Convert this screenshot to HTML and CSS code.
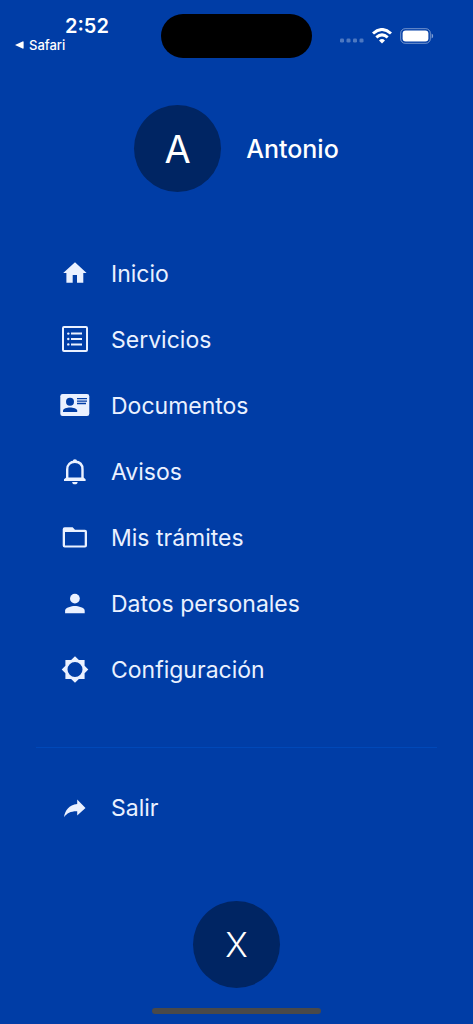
FILE: index.html
```html
<!DOCTYPE html>
<html lang="es">
<head>
<meta charset="utf-8">
<meta name="viewport" content="width=device-width, initial-scale=1">
<title>Menú</title>
<link rel="stylesheet" href="styles.css">
</head>
<body>
<div class="screen">
  <header class="status">
    <div class="status-left">
      <time class="clock">2:52</time>
      <a class="back" href="#"><svg class="back-arrow" viewBox="0 0 9 8" aria-hidden="true"><path d="M0 4 7.500 .4Q8.600 0 8.600 1V7Q8.600 8 7.500 7.600Z"/></svg>Safari</a>
    </div>
    <div class="island"></div>
    <div class="status-right">
      <svg class="signal" viewBox="0 0 24 5" aria-hidden="true"><rect y=".5" width="4" height="4" rx="1.300"/><rect x="6.500" y=".5" width="4" height="4" rx="1.300"/><rect x="13" y=".5" width="4" height="4" rx="1.300"/><rect x="19.500" y=".5" width="4" height="4" rx="1.300"/></svg>
      <svg class="wifi" viewBox="0 0 20 16" aria-hidden="true"><path class="arc" d="M1 5.500Q10-2.500 19 5.500M4.300 9.300Q10 4.500 15.700 9.300"/><path d="M10 15.500 7 12.400Q10 9.800 13 12.400Z"/></svg>
      <svg class="battery" viewBox="0 0 34 16" aria-hidden="true"><rect class="shell" x=".7" y=".7" width="29.600" height="14.600" rx="4.500"/><rect x="2.600" y="2.500" width="25.800" height="11" rx="3"/><path class="tip" d="M31.600 5.600Q33.200 6.300 33.200 8T31.600 10.400Z"/></svg>
    </div>
  </header>

  <section class="profile">
    <div class="disc avatar">A</div>
    <h1 class="name">Antonio</h1>
  </section>

  <nav class="menu" aria-label="Principal">
    <a class="item" href="#"><svg class="icon" viewBox="0 1 32 32" aria-hidden="true"><path d="M16 5.200 27.600 16H24.300V25.800H18V18H13.700V25.800H7.400V16H4.200Z"/></svg>Inicio</a>
    <a class="item" href="#"><svg class="icon" viewBox="0 1 32 32" aria-hidden="true"><rect class="line" x="4" y="4" width="24" height="24" rx="1"/><path class="line" d="M12 10.600H23M12 16H23M12 21.400H23"/><circle cx="9.300" cy="10.600" r="1.200"/><circle cx="9.300" cy="16" r="1.200"/><circle cx="9.300" cy="21.400" r="1.200"/></svg>Servicios</a>
    <a class="item" href="#"><svg class="icon" viewBox="0 1 32 32" aria-hidden="true"><rect x="1.300" y="5" width="29" height="22" rx="2.300"/><g class="cut"><circle cx="11" cy="12.700" r="4"/><path d="M4 23V21.500C4 19.500 8 18.400 11 18.400S18.200 19.500 18.200 21.500V23Z"/></g><path class="rule" d="M18 9.700H28M18 12.100H28M18 14.500H27"/></svg>Documentos</a>
    <a class="item" href="#"><svg class="icon" viewBox="0 1 32 32" aria-hidden="true"><path class="bell" d="M8.200 24.500V14.500C8.200 9.500 11.300 6.800 15.900 6.800S23.500 9.500 23.500 14.500V24.500"/><path d="M13.700 6.500A2.200 2.200 0 0 1 18.100 6.500V8H13.700ZM7.200 22.600H24.500L26.600 24.300V26H5V24.300ZM13.200 27H18.600A2.700 2.300 0 0 1 13.200 27Z"/></svg>Avisos</a>
    <a class="item" href="#"><svg class="icon" viewBox="0 1 32 32" aria-hidden="true"><path fill-rule="evenodd" d="M5.700 6.300H13.600L16 8.700H26Q28 8.700 28 10.700V24.500Q28 26.500 26 26.500H5.700Q3.700 26.500 3.700 24.500V8.300Q3.700 6.300 5.700 6.300ZM6 11V24.400H25.700V11Z"/></svg>Mis trámites</a>
    <a class="item" href="#"><svg class="icon" viewBox="0 1 32 32" aria-hidden="true"><circle cx="15.900" cy="11.600" r="4.900"/><path d="M6.100 26.200V23.700C6.100 20.500 12.600 19 15.900 19S25.700 20.500 25.700 23.700V26.200Z"/></svg>Datos personales</a>
    <a class="item" href="#"><svg class="icon" viewBox="0 1 32 32" aria-hidden="true"><path fill-rule="evenodd" d="M16 3.200 19.900 7.100H25.600V12.800L29.300 16.500 25.600 20.200V25.900H19.900L16 29.800 12.100 25.900H6.400V20.200L2.700 16.500 6.400 12.800V7.100H12.100ZM16 9A7.500 7.500 0 1 0 16 24 7.500 7.500 0 1 0 16 9Z"/></svg>Configuración</a>
  </nav>

  <hr class="divider">

  <nav class="exit" aria-label="Sesión">
    <a class="item" href="#"><svg class="icon" viewBox="0 0 32 32" aria-hidden="true"><path d="M18.200 7.600 26.500 15.900 18.200 23.600V19.200C12 19 8 21 5 25.200 6 18.500 10 12.800 18.200 12Z"/></svg>Salir</a>
  </nav>

  <button class="disc close" type="button" aria-label="Cerrar">X</button>
  <div class="home-bar"></div>
</div>
</body>
</html>
```
FILE: styles.css
```css
* { box-sizing: border-box; }

body {
  margin: 0;
  background: #003da6;
  color: #fff;
  font-family: Inter, "Liberation Sans", sans-serif;
}

a { color: inherit; text-decoration: none; }

svg { fill: currentColor; flex: none; }

.screen {
  min-height: 100vh;
  display: flex;
  flex-direction: column;
}

.status {
  display: grid;
  grid-template-columns: 1fr 151px 1fr;
  align-items: start;
  padding-top: 14px;
}

.status-left { padding-left: 15px; }

.clock {
  display: block;
  padding-left: 50px;
  font-size: 20px;
  font-weight: 600;
  line-height: 24px;
}

.back {
  display: flex;
  align-items: center;
  gap: 5px;
  font-size: 13px;
  font-weight: 500;
  line-height: 14px;
}

.back-arrow { width: 9px; height: 8px; }

.island {
  height: 44px;
  border-radius: 22px;
  background: #000;
}

.status-right {
  display: flex;
  justify-content: flex-end;
  align-items: center;
  gap: 8px;
  height: 43px;
  padding-right: 39px;
}

.signal { width: 24px; height: 5px; margin-top: 10px; opacity: .3; }
.wifi { width: 20px; height: 16px; }
.arc { fill: none; stroke: currentColor; stroke-width: 3; }
.battery { width: 34px; height: 16px; }
.shell { fill: none; stroke: currentColor; opacity: .45; }
.tip { opacity: .5; }

.profile {
  display: flex;
  justify-content: center;
  align-items: center;
  gap: 25px;
  padding-top: 47px;
}

.disc {
  display: flex;
  justify-content: center;
  align-items: center;
  width: 87px;
  height: 87px;
  border: 0;
  border-radius: 50%;
  background: #002563;
  color: inherit;
  font-family: inherit;
}

.avatar { font-size: 38px; }

.name {
  margin: 0;
  font-size: 25px;
  font-weight: 500;
}

.menu { padding-top: 49px; }

.item {
  display: flex;
  align-items: center;
  gap: 20px;
  height: 66px;
  padding-left: 59px;
  color: #eaf1ff;
  font-size: 23px;
  font-weight: 400;
}

.icon { width: 32px; height: 32px; }
.line { fill: none; stroke: currentColor; stroke-width: 2; }
.cut { fill: #003da6; }
.rule { stroke: #003da6; stroke-width: 1.300; }
.bell { fill: none; stroke: currentColor; stroke-width: 2.400; }

.divider {
  align-self: stretch;
  height: 1px;
  margin: 44px 36px 27px;
  border: 0;
  background: #0048b8;
}

.close {
  align-self: center;
  margin-top: 60px;
  padding: 0;
  font-size: 34px;
  font-weight: 300;
  cursor: pointer;
}

.home-bar {
  align-self: center;
  width: 169px;
  height: 6px;
  margin: auto 0 10px;
  border-radius: 3px;
  background: #494949;
}
```
